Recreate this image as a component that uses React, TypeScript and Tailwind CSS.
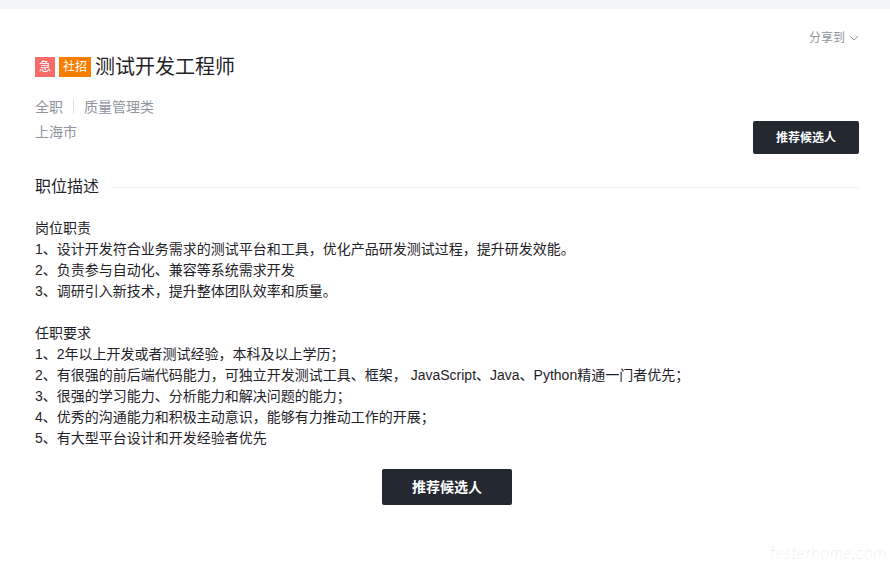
import React from "react";

const DUTIES = [
  "1、设计开发符合业务需求的测试平台和工具，优化产品研发测试过程，提升研发效能。",
  "2、负责参与自动化、兼容等系统需求开发",
  "3、调研引入新技术，提升整体团队效率和质量。",
];

const REQUIREMENTS = [
  "1、2年以上开发或者测试经验，本科及以上学历；",
  "2、有很强的前后端代码能力，可独立开发测试工具、框架， JavaScript、Java、Python精通一门者优先；",
  "3、很强的学习能力、分析能力和解决问题的能力；",
  "4、优秀的沟通能力和积极主动意识，能够有力推动工作的开展；",
  "5、有大型平台设计和开发经验者优先",
];

const App: React.FC = () => {
  return (
    <div
      className="relative min-h-[574px] w-[890px] bg-white text-[#1f2329]"
      style={{ fontFamily: '"Liberation Sans", "Noto Sans CJK SC", sans-serif' }}
    >
      {/* top strip */}
      <div className="h-[9px] bg-[#f4f5f7]"></div>

      <div className="pl-[35px] pr-[31px]">
        {/* share */}
        <div className="flex justify-end pt-[20px]">
          <button className="flex items-center gap-[4px] text-[12px] leading-[18px] text-[#8f959e]">
            分享到
            <svg width="10" height="10" viewBox="0 0 10 10" fill="none">
              <path d="M1 3.2L5 7l4-3.8" stroke="#8f959e" strokeWidth="1" />
            </svg>
          </button>
        </div>

        {/* title */}
        <div className="mt-[7px] flex h-[26px] items-center">
          <span className="flex h-[20px] w-[20px] items-center justify-center bg-[#f76b6b] text-[12px] text-white">
            急
          </span>
          <span className="ml-[4px] flex h-[20px] w-[32px] items-center justify-center bg-[#f77e00] text-[12px] text-white">
            社招
          </span>
          <h1 className="ml-[4px] text-[20px] leading-[26px]">测试开发工程师</h1>
        </div>

        {/* meta + action */}
        <div className="mt-[16px] flex items-start justify-between">
          <div className="text-[14px] leading-[22px] text-[#8f959e]">
            <div className="flex items-center">
              <span>全职</span>
              <span className="mx-[10px] h-[14px] w-px bg-[#dee0e3]"></span>
              <span>质量管理类</span>
            </div>
            <div className="mt-[3px]">上海市</div>
          </div>
          <button className="mt-[25px] h-[33px] w-[106px] rounded-[2px] bg-[#232831] text-[12px] font-bold text-white">
            推荐候选人
          </button>
        </div>

        {/* section heading */}
        <div className="mt-[21px] flex items-center gap-[12px]">
          <h2 className="text-[16px] leading-[24px]">职位描述</h2>
          <div className="h-px flex-1 bg-[#f0f1f2]"></div>
        </div>

        {/* description */}
        <div className="mt-[19px] text-[14px] leading-[21px]">
          <div>岗位职责</div>
          {DUTIES.map((line, index) => (
            <div key={index}>{line}</div>
          ))}
          <div className="h-[21px]"></div>
          <div>任职要求</div>
          {REQUIREMENTS.map((line, index) => (
            <div key={index}>{line}</div>
          ))}
        </div>

        <div className="mt-[20px] flex justify-center">
          <button className="h-[36px] w-[130px] rounded-[2px] bg-[#232831] text-[14px] font-bold text-white">
            推荐候选人
          </button>
        </div>
      </div>

      {/* watermark */}
      <div
        className="absolute bottom-[9px] right-[3px] text-[17px] font-thin italic tracking-[0.5px] text-[#cfcfcf]"
        style={{ fontFamily: "Lato, sans-serif" }}
      >
        testerhome.com
      </div>
    </div>
  );
};

export default App;
